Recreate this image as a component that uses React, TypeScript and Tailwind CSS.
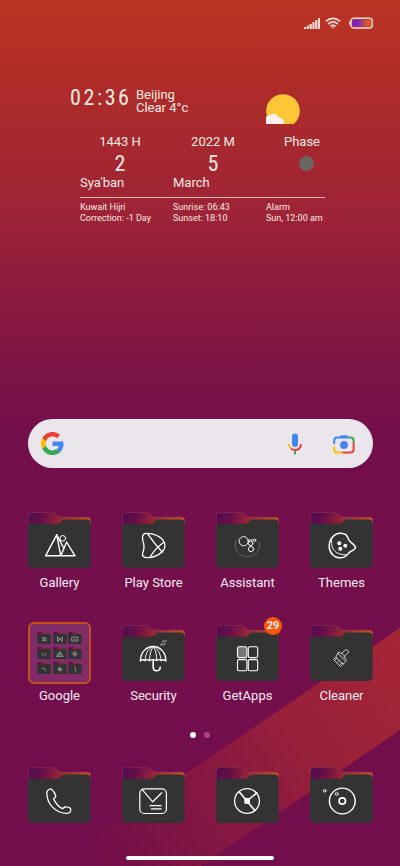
// App.tsx
import { useId, type ReactNode } from 'react';

type AppItem = {
  name: string;
  glyph: ReactNode;
  badge?: number;
};

// Glyphs share the folder's 63x56 canvas
const glyphs = {
  gallery: (
    <g strokeWidth="1.4">
      <path d="M28.7 22.8 17.6 43.8H47L38.6 30 32.8 43.8Z" />
      <path d="M28.7 22.8 36 36.5" />
      <circle cx="34.8" cy="26.3" r="2.8" strokeWidth="1" />
    </g>
  ),
  play: (
    <g strokeWidth="1.3">
      <path d="M20.6 24.5Q20.8 21.3 24.5 21.3C33 21.3 42.9 26 42.9 34C42.9 40 33.5 45.7 25.5 45.7C21 45.7 19.8 43.5 20.8 40.5C22.6 36 22.4 33 21 29.5Q20.3 27 20.6 24.5Z" />
      <path d="M25.5 21.6C29.5 27.5 34 33.5 40.2 40M41.8 30.2C36.5 34 31.5 39 28 45.3" />
    </g>
  ),
  assistant: (
    <g strokeWidth="0.9">
      <path d="M20.2 28C16.5 38 23 44.6 31.5 44.6S45 37.5 43.2 29.5" stroke="#777" strokeWidth="0.7" />
      <circle cx="27.7" cy="29.2" r="4.6" />
      <circle cx="34.6" cy="31.4" r="2.2" />
      <circle cx="38.5" cy="28.3" r="1.3" />
      <circle cx="35" cy="37" r="2.6" />
      <path d="M31.8 28H37M34.8 33.6V34.5" />
    </g>
  ),
  themes: (
    <g strokeWidth="1.5">
      <path d="M30.5 21.3C36 21.3 37.8 24.5 38.4 27.2C39.2 31 45.4 31.5 45.5 36C44 38.8 41.2 38.6 39.4 40.4C37.2 42.6 35.5 45.8 30.3 45.8C24 45.8 19.2 40.6 19.2 34.2C19.2 27 24.3 21.3 30.5 21.3Z" />
      <path d="M21.6 28.5C20.8 37.5 26 43.3 35.6 42.6" strokeWidth="0.9" />
      <g fill="#fff" stroke="none">
        <circle cx="29.3" cy="31.3" r="2" />
        <circle cx="35.3" cy="33.8" r="2" />
        <circle cx="30.3" cy="36.8" r="2" />
      </g>
    </g>
  ),
  security: (
    <g strokeWidth="1.3">
      <path d="M18.3 36C18.5 27.5 24 21.5 31.2 21.5S43.8 27.5 44 36Q41.8 33.8 39 35.6Q37.2 33.8 34.8 35.6Q31.2 33.5 27.6 35.6Q25 33.8 23 35.6Q20.4 33.8 18.3 36Z" />
      <path d="M23 35.4C23.4 29 26 24 30.4 21.7M39 35.4C38.6 29 36.2 24 32 21.7M27.6 35.4C27.7 29 29 24.5 31.2 21.7M34.8 35.4C34.7 29 33.4 24.5 31.2 21.7" strokeWidth="0.9" />
      <path d="M31.2 35V42Q31.2 45.8 34.6 45.8T38.2 42.2" strokeWidth="1.6" />
      <path d="m40 18.5-1.2 1.6M42.6 18.5l-1.2 1.8M41.6 15.8l-0.8 1M44 15.6l-1 1.2" strokeWidth="0.9" />
    </g>
  ),
  getApps: (
    <g strokeWidth="1.1">
      <rect x="21.5" y="21.8" width="9.4" height="10.8" rx="1.5" fill="#777" />
      <rect x="32.3" y="21.8" width="9.4" height="10.8" rx="1.5" />
      <rect x="21.5" y="34.6" width="9.4" height="11.2" rx="1.5" />
      <rect x="32.3" y="34.6" width="9.4" height="11.2" rx="1.5" />
    </g>
  ),
  cleaner: (
    <g strokeWidth="1" stroke="#ccc">
      <path d="M27.8 28.3 35.8 36.3 30.6 41.6 23.4 34.4Q26.6 32.6 27.8 28.3Z" />
      <path d="M29.2 27 31 28.8 35.6 24.8Q37.4 24.3 38.4 26Q39 28 37.2 28.6L33.8 32 36.8 35.2" />
      <path d="M29 27.2 27.8 28.3M26.2 32.6l6.8 6.6M25.2 34.4l1.8-1M27.8 37l2-2M30.2 39.4l2-2M31.6 28.4l3.4 3" />
    </g>
  ),
  phone: (
    <path
      d="M23.2 21.9Q19 22.2 18.8 26.2C18.8 36.5 27.4 46.3 38.8 46.4Q41.2 46.4 42.2 45.2Q43 43.4 42.6 41.4Q39.6 39.6 37 39.9L34.6 41.6C31 40.3 27 35.8 25.6 31.8Q27.6 30.2 27.8 28.8Q26.4 24.4 23.2 21.9Z"
      strokeWidth="1.3"
    />
  ),
  mail: (
    <g strokeWidth="1.2">
      <rect x="17.8" y="21.9" width="26.6" height="24.6" rx="4.5" />
      <path d="M20.4 22.8 30.7 34.8 39.8 25.8" />
      <path d="M28 38.7H39.2M29.4 41.9H39.2" />
    </g>
  ),
  browser: (
    <g strokeWidth="1.3">
      <circle cx="31" cy="34" r="12.4" />
      <path d="M23 24.5 38.8 43.6M31 34 40.8 25.8" strokeWidth="1.6" />
      <path d="M28.8 31.5 33.4 32 33 36.4 29 36Z" fill="#fff" />
    </g>
  ),
  camera: (
    <g strokeWidth="1.4">
      <circle cx="32.3" cy="34" r="12.9" />
      <circle cx="32.3" cy="34" r="3.2" strokeWidth="1.7" />
      <circle cx="26.7" cy="27" r="1.5" strokeWidth="0.8" />
      <circle cx="14.7" cy="23.8" r="1.3" strokeWidth="0.9" />
    </g>
  ),
};

const apps: AppItem[] = [
  { name: 'Gallery', glyph: glyphs.gallery },
  { name: 'Play Store', glyph: glyphs.play },
  { name: 'Assistant', glyph: glyphs.assistant },
  { name: 'Themes', glyph: glyphs.themes },
  { name: 'Google', glyph: null },
  { name: 'Security', glyph: glyphs.security },
  { name: 'GetApps', glyph: glyphs.getApps, badge: 29 },
  { name: 'Cleaner', glyph: glyphs.cleaner },
];

const dock: AppItem[] = [
  { name: 'Phone', glyph: glyphs.phone },
  { name: 'Messages', glyph: glyphs.mail },
  { name: 'Browser', glyph: glyphs.browser },
  { name: 'Camera', glyph: glyphs.camera },
];

const miniGlyphs = [
  'M24 26h10M24 33h14M24 40h12M40 26v14',
  'M20 24v20l11-10 11 10V24L31 34Z',
  'M18 24h27v18H18ZM27 36h9',
  'M23 28l4 4M40 28l-4 4M23 40l4-4M40 40l-4-4',
  'M31 22l7 11H24ZM23 35l6 9H17ZM40 35l6 9H34Z',
  'M31 22l11 11-11 11-11-11ZM31 29v8M27 33h8',
  'M22 30q16-6 16 12',
  'M31 22v24M20 34h22M24 28l14 12',
  'M33 22q-6 8 0 12t0 12',
];

function Folder({ children, className }: { children?: ReactNode; className: string }) {
  const id = useId();
  return (
    <svg viewBox="0 0 63 56" className={className} fill="none" aria-hidden="true">
      <defs>
        <linearGradient id={id} x1="0" x2="1" y1="0" y2="0.1">
          <stop offset="0" stopColor="#500b4f" />
          <stop offset="0.25" stopColor="#650f48" />
          <stop offset="0.5" stopColor="#92203a" />
          <stop offset="0.62" stopColor="#97332f" />
          <stop offset="1" stopColor="#c6511f" />
        </linearGradient>
      </defs>
      <path
        d="M0.3 16V5Q0.3 0.4 5 0.4H24Q26.4 0.4 28 2L30 4Q31.4 5.2 33.5 5.2H59.5Q62.7 5.2 62.7 8.5V12Z"
        fill={`url(#${id})`}
        stroke="#a54b6b"
        strokeOpacity="0.6"
        strokeWidth="0.6"
      />
      <path
        d="M0 14.5Q0 11.8 2.8 11.8H29Q31.5 11.8 33 9.8Q34.5 7.4 37 7.4H59Q62.6 7.4 62.6 11V51.5Q62.6 56 58 56H4.6Q0 56 0 51.5Z"
        fill="#333333"
      />
      <g stroke="#fff" strokeLinejoin="round" strokeLinecap="round">
        {children}
      </g>
    </svg>
  );
}

function GoogleGroup() {
  return (
    <span className="grid h-[62px] w-[63px] grid-cols-3 place-content-center gap-x-0.5 gap-y-[3px] rounded-md border-2 border-[#c4501c] bg-[#812c69] px-[7px]">
      {miniGlyphs.map((d) => (
        <Folder key={d} className="h-3 w-3.5">
          <path d={d} strokeWidth="3" stroke="#bbb" />
        </Folder>
      ))}
    </span>
  );
}

function AppIcon({ app, showLabel = true }: { app: AppItem; showLabel?: boolean }) {
  return (
    <button type="button" aria-label={app.name} className="flex w-[63px] flex-col items-center">
      <span className="relative flex h-16 w-full items-center justify-center">
        {app.glyph ? <Folder className="h-14 w-[63px]">{app.glyph}</Folder> : <GoogleGroup />}
        {app.badge && (
          <span className="absolute -right-[3px] -top-1 flex size-[18px] items-center justify-center rounded-full bg-[#fb5607] text-[11px] font-bold">
            {app.badge}
          </span>
        )}
      </span>
      {showLabel && <span className="whitespace-nowrap text-[13px] leading-[22px]">{app.name}</span>}
    </button>
  );
}

function StatusBar() {
  return (
    <header className="flex h-[46px] items-center justify-end pr-[27px]">
      <svg viewBox="0 0 16 12" className="mr-[5px] h-3 w-4" fill="#f6dcd6">
        <rect x="0" y="10" width="2.2" height="2" />
        <rect x="2.8" y="8.6" width="2.2" height="3.4" />
        <rect x="5.6" y="7" width="2.2" height="5" />
        <rect x="8.4" y="5" width="2.2" height="7" />
        <rect x="11.2" y="3" width="2.2" height="9" />
        <rect x="14" y="1" width="2" height="11" />
      </svg>
      <svg viewBox="0 0 16 12" className="mr-2 h-3 w-4" fill="none" stroke="#f6dcd6" strokeWidth="1.7">
        <path d="M0.8 4.4Q8-1.8 15.2 4.4M3.2 7Q8 2.8 12.8 7M5.4 9.4Q8 7.2 10.6 9.4" />
        <path d="m6.6 10.2 1.4 1.6 1.4-1.6Z" fill="#f6dcd6" stroke="none" />
      </svg>
      <svg viewBox="0 0 24 12" className="h-3 w-6" fill="none">
        <defs>
          <linearGradient id="battery">
            <stop offset="0" stopColor="#7a12e0" />
            <stop offset="0.35" stopColor="#7b2fb0" />
            <stop offset="0.8" stopColor="#e0562e" />
            <stop offset="1" stopColor="#ee5a22" />
          </linearGradient>
        </defs>
        <rect x="2" y="1.2" width="21.2" height="9.8" rx="2.8" stroke="#f6dcd6" strokeWidth="1.4" />
        <rect x="3.6" y="2.7" width="18" height="6.8" rx="1" fill="url(#battery)" />
        <rect x="0" y="4" width="1.4" height="4" rx="0.7" fill="#f6dcd6" />
      </svg>
    </header>
  );
}

function Widget() {
  return (
    <section className="mt-[42px] text-[#fdebe4]">
      <div className="flex h-9 pl-[70px]">
        <time className="flex w-[59px] justify-between font-['Roboto_Condensed','Open_Sans_Condensed','Noto_Sans_Condensed',Roboto,sans-serif] text-[22px] leading-5">
          {'02:36'.split('').map((char, i) => (
            <span key={i}>{char}</span>
          ))}
        </time>
        <p className="ml-[7px] w-[130px] text-[13px] leading-[13px]">
          Beijing
          <br />
          Clear 4°c
        </p>
        <svg viewBox="0 0 34 30" className="mt-1.5 h-[30px] w-[34px]">
          <circle cx="17" cy="17" r="16.8" fill="#fdc636" />
          <path d="M0 30V24Q0 21.5 2.5 21.5Q3.5 19.8 7 19.8Q11 19.8 12.5 23.6Q17 23.5 17.8 28V30Z" fill="#fff1ee" />
        </svg>
      </div>

      <div className="ml-20 mt-[9px] flex gap-[13px] text-[13px]">
        <div className="w-20">
          <p className="text-center leading-[18px]">1443 H</p>
          <p className="text-center font-['Roboto_Condensed','Open_Sans_Condensed','Noto_Sans_Condensed',Roboto,sans-serif] text-[22px] leading-[25px]">2</p>
          <p className="leading-[14px]">Sya'ban</p>
        </div>
        <div className="w-20">
          <p className="text-center leading-[18px]">2022 M</p>
          <p className="text-center font-['Roboto_Condensed','Open_Sans_Condensed','Noto_Sans_Condensed',Roboto,sans-serif] text-[22px] leading-[25px]">5</p>
          <p className="leading-[14px]">March</p>
        </div>
        <div className="w-20">
          <p className="pr-2 text-center leading-[18px]">Phase</p>
          <span className="mx-auto mt-[5px] block size-[15px] rounded-full bg-[#6a6663]" />
        </div>
      </div>

      <div className="ml-20 mr-[75px] mt-[7px] border-t border-[#eeb5ae]" />
      <div className="ml-20 mt-1 flex gap-[13px] whitespace-nowrap text-[9px] leading-[11px]">
        <p className="w-20">Kuwait Hijri<br />Correction: -1 Day</p>
        <p className="w-20">Sunrise: 06:43<br />Sunset: 18:10</p>
        <p className="w-20">Alarm<br />Sun, 12:00 am</p>
      </div>
    </section>
  );
}

function SearchBar() {
  return (
    <form className="ml-7 mr-[27px] mt-[195px] flex h-[49px] items-center rounded-full bg-[#ebe6ec] pl-[13px] pr-[18px]">
      <svg viewBox="0 0 48 48" className="size-[23px] shrink-0" aria-hidden="true">
        <path fill="#EA4335" d="M24 9.5c3.54 0 6.71 1.22 9.21 3.6l6.85-6.85C35.9 2.38 30.47 0 24 0 14.62 0 6.51 5.38 2.56 13.22l7.98 6.19C12.43 13.72 17.74 9.5 24 9.5z" />
        <path fill="#4285F4" d="M46.98 24.55c0-1.57-.15-3.09-.38-4.55H24v9.02h12.94c-.58 2.96-2.26 5.48-4.78 7.18l7.73 6c4.51-4.18 7.09-10.36 7.09-17.65z" />
        <path fill="#FBBC05" d="M10.53 28.59c-.48-1.45-.76-2.99-.76-4.59s.27-3.14.76-4.59l-7.98-6.19C.92 16.46 0 20.12 0 24c0 3.88.92 7.54 2.56 10.78l7.97-6.19z" />
        <path fill="#34A853" d="M24 48c6.48 0 11.93-2.13 15.89-5.81l-7.73-6c-2.15 1.45-4.92 2.3-8.16 2.3-6.26 0-11.57-4.22-13.47-9.91l-7.98 6.19C6.51 42.62 14.62 48 24 48z" />
      </svg>
      <input type="search" aria-label="Search" className="min-w-0 flex-1 bg-transparent px-3 text-[#333] outline-none" />
      <button type="button" aria-label="Voice search" className="mr-[31px]">
        <svg viewBox="0 0 14 22" className="h-[22px] w-3.5" fill="none" strokeWidth="1.9">
          <rect x="4" y="0.5" width="6" height="13.5" rx="3" fill="#4285F4" />
          <path d="M0.9 11.2Q1.2 14 3 15.6" stroke="#FBBC05" />
          <path d="M3 15.6Q4.8 17.1 7 17.1Q12.4 16.8 13.1 11.2" stroke="#EA4335" />
          <path d="M7 18V21.5" stroke="#34A853" />
        </svg>
      </button>
      <button type="button" aria-label="Search with camera">
        <svg viewBox="0 0 22 20" className="h-5 w-[22px]" fill="none" strokeWidth="2">
          <path d="M1.2 10V6.4Q1.2 3.4 4.2 3.4H16" stroke="#4285F4" />
          <path d="M6.6 3.2 8 1.2H14L15.4 3.2Z" fill="#4285F4" />
          <path d="M15.6 3.4H17.6Q20.6 3.4 20.6 6.4V9" stroke="#34A853" />
          <path d="M20.6 8.6V15.6Q20.6 18.6 17.6 18.6H9.4" stroke="#EA4335" />
          <path d="M9.6 18.6H4.2Q1.2 18.6 1.2 15.6V12.4" stroke="#FBBC05" />
          <circle cx="11" cy="11" r="3.9" fill="#4285F4" />
        </svg>
      </button>
    </form>
  );
}

export default function App() {
  return (
    <div className="relative isolate flex min-h-screen flex-col overflow-hidden bg-[linear-gradient(to_bottom,#bb3422_0,#ac2b2a_100px,#9e2336_210px,#861841_320px,#730f4b_430px,#720e4b_100%)] font-[Roboto,sans-serif] text-[#fbeaf3]">
      {/* Diagonal wallpaper stripe */}
      <svg viewBox="0 0 400 240" preserveAspectRatio="none" className="absolute bottom-0 left-0 -z-10 h-60 w-full" aria-hidden="true">
        <defs>
          <linearGradient id="stripe" gradientUnits="userSpaceOnUse" x1="400" y1="20" x2="90" y2="230">
            <stop offset="0" stopColor="#a52636" />
            <stop offset="0.35" stopColor="#98203a" />
            <stop offset="0.65" stopColor="#861742" />
            <stop offset="1" stopColor="#720e4b" />
          </linearGradient>
        </defs>
        <path d="M400 2V104L201 240H50Z" fill="url(#stripe)" />
      </svg>

      <StatusBar />
      <Widget />
      <SearchBar />

      <main className="mt-10 grid grid-cols-[repeat(4,63px)] justify-between gap-y-[27px] pl-7 pr-[27px]">
        {apps.map((app) => (
          <AppIcon key={app.name} app={app} />
        ))}
      </main>

      <div className="mt-[25px] flex justify-center gap-2">
        <span className="size-1.5 rounded-full bg-white" />
        <span className="size-1.5 rounded-full bg-[#a64a86]" />
      </div>

      <nav className="mt-[25px] grid grid-cols-[repeat(4,63px)] justify-between pl-7 pr-[27px]">
        {dock.map((app) => (
          <AppIcon key={app.name} app={app} showLabel={false} />
        ))}
      </nav>

      <div className="mx-auto mb-1.5 mt-auto h-1 w-[148px] rounded-full bg-white" />
    </div>
  );
}
